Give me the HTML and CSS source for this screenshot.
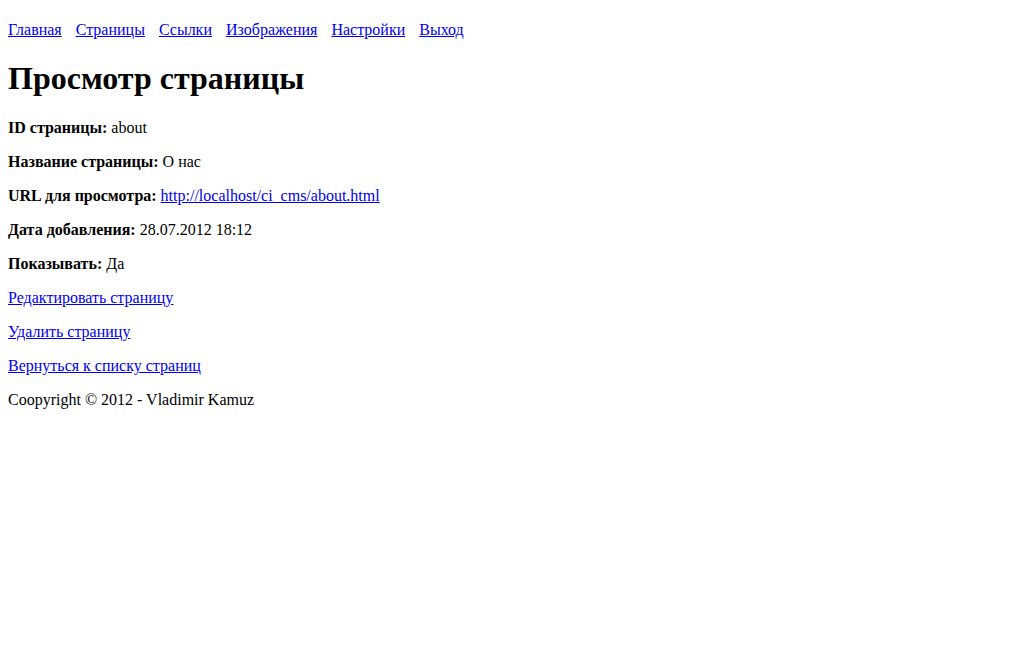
FILE: index.html
```html
<!DOCTYPE html>
<html lang="ru">
<head>
<meta charset="utf-8">
<title>Просмотр страницы</title>
<link rel="stylesheet" href="styles.css">
</head>
<body>
<p class="menu"><a href="#">Главная</a><a href="#">Страницы</a><a href="#">Ссылки</a><a href="#">Изображения</a><a href="#">Настройки</a><a href="#">Выход</a></p>
<h1>Просмотр страницы</h1>
<p><b>ID страницы:</b> about</p>
<p><b>Название страницы:</b> О нас</p>
<p><b>URL для просмотра:</b> <a href="#">http://localhost/ci_cms/about.html</a></p>
<p><b>Дата добавления:</b> 28.07.2012 18:12</p>
<p><b>Показывать:</b> Да</p>
<p><a href="#">Редактировать страницу</a></p>
<p><a href="#">Удалить страницу</a></p>
<p><a href="#">Вернуться к списку страниц</a></p>
<p>Coopyright © 2012 - Vladimir Kamuz</p>
</body>
</html>
```

FILE: styles.css
```css
body {
  font-family: "Liberation Serif", "Times New Roman", serif;
  font-size: 16px;
  color: #000;
  background: #fff;
  margin: 5px 8px 8px;
}
a {
  color: #0000ee;
}
.menu a {
  margin-right: 14px;
}
.menu a:last-child {
  margin-right: 0;
}
```
